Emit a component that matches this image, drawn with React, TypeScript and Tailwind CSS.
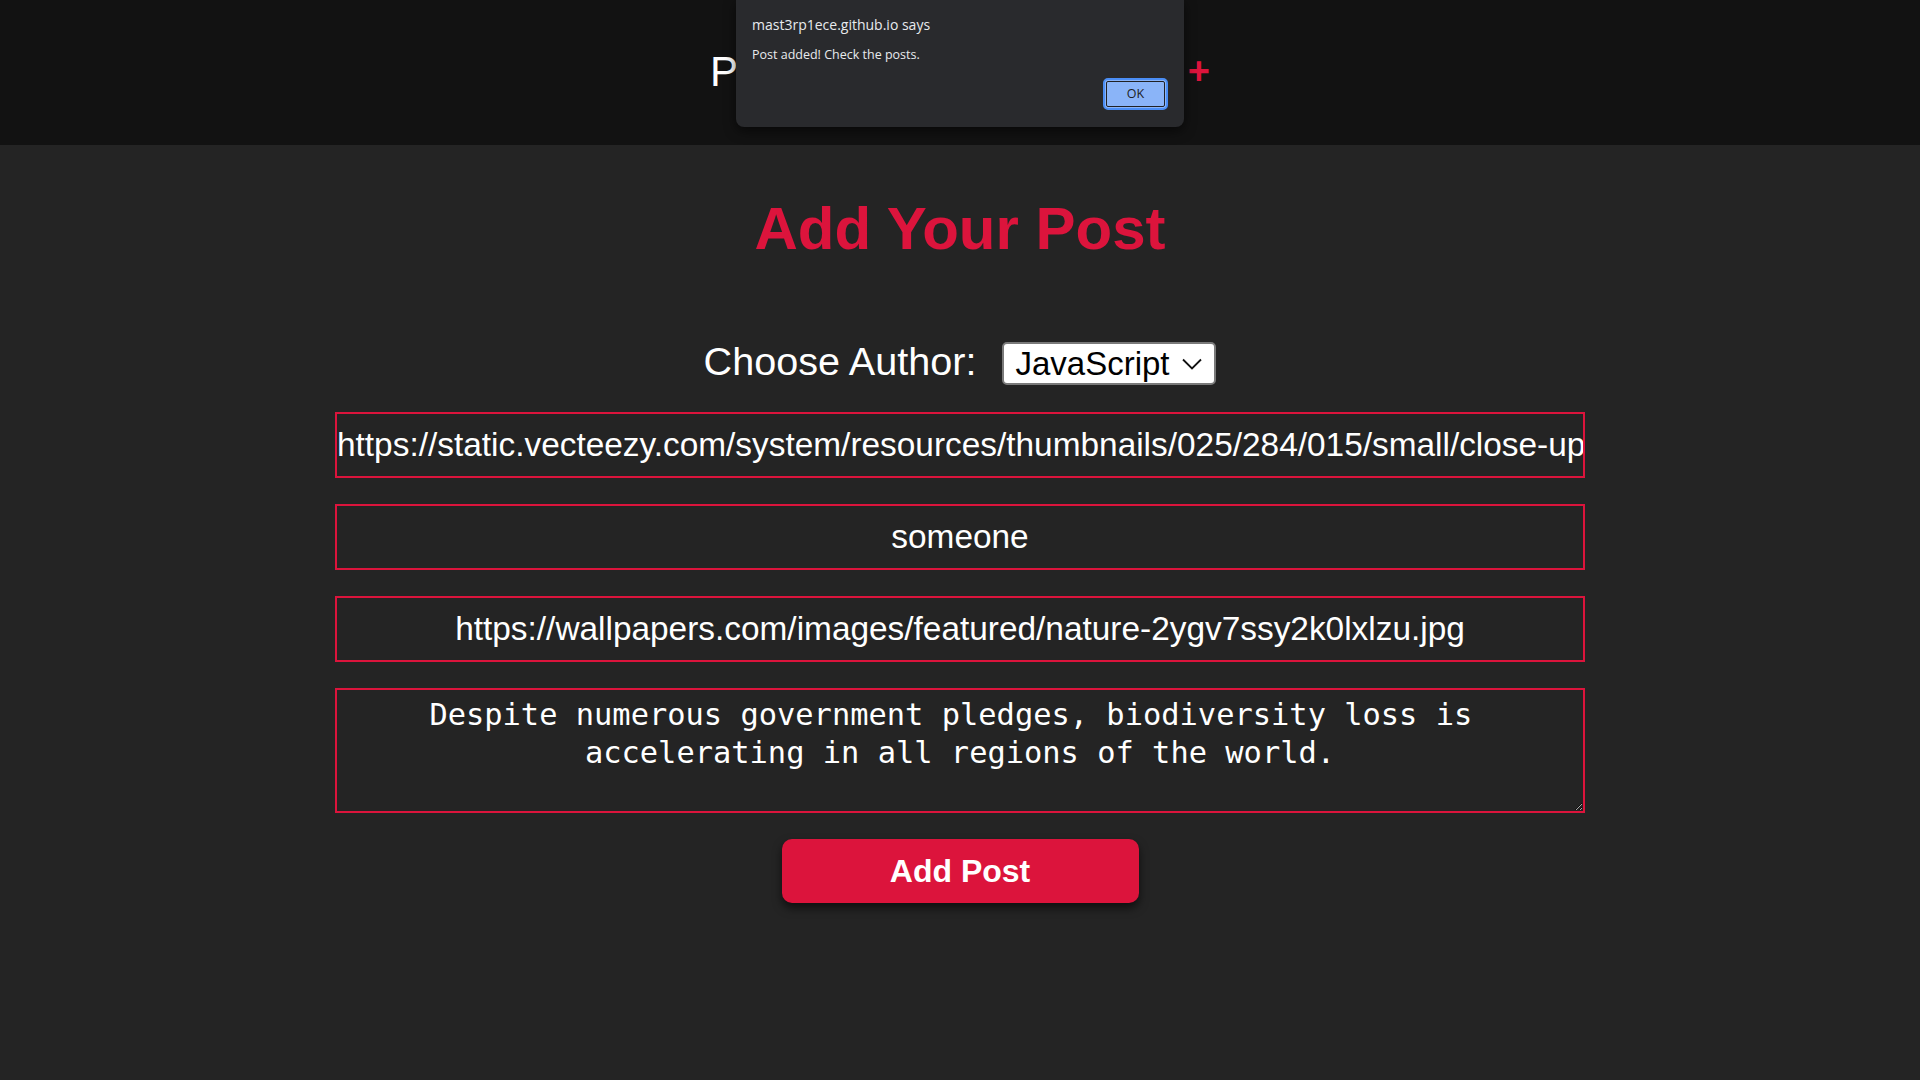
import React from "react";

export default function App() {
  return (
    <div className="min-h-screen w-full bg-[#242424] text-white" style={{ fontFamily: '"Liberation Sans", Arial, sans-serif' }}>
      {/* Header */}
      <header className="relative h-[145px] bg-[#121212] flex items-center justify-center">
        <div className="w-[500px] flex items-center justify-between -mt-[2px]">
          <span className="text-[42px] leading-none text-white">Posts</span>
          <span className="text-[38px] leading-none font-bold text-[#dc143c] mt-[-2px]">+</span>
        </div>

        {/* Alert dialog */}
        <div
          className="absolute top-0 left-[736px] w-[448px] h-[127px] bg-[#292a2d] rounded-b-[8px] shadow-[0_4px_12px_rgba(0,0,0,0.55)] text-[#e8eaed]"
          style={{ fontFamily: '"Open Sans", "Noto Sans", sans-serif' }}
        >
          <div className="pl-[16px] pt-[15px] text-[14px] leading-[19px]">mast3rp1ece.github.io says</div>
          <div className="pl-[16px] pt-[12px] text-[12.5px] leading-[17px]">Post added! Check the posts.</div>
          <div className="flex justify-end pr-[16px] pt-[15px]">
            <button className="w-[65px] h-[32px] rounded-[5px] bg-[#8ab4f8] border-2 border-[#4b8ef5] outline outline-1 outline-[#202124] outline-offset-[-4px] text-[#202124] text-[12.5px]">
              OK
            </button>
          </div>
        </div>
      </header>

      {/* Main */}
      <main className="flex flex-col items-center">
        <h1 className="mt-[49px] text-[60px] leading-[69px] font-bold text-[#dc143c]">Add Your Post</h1>

        <div className="mt-[79px] flex items-start justify-center gap-[26px]">
          <span className="text-[39.6px] leading-[39px] text-white">Choose Author:</span>
          <div className="w-[214px] h-[43px] bg-white rounded-[5px] border-2 border-[#7a7a7a] flex items-center justify-between pl-[11px] pr-[12px]">
            <span className="text-[33px] leading-none text-black">JavaScript</span>
            <svg width="20" height="12" viewBox="0 0 20 12" fill="none">
              <path d="M1 1.5 L10 10.5 L19 1.5" stroke="#111" strokeWidth="1.8" />
            </svg>
          </div>
        </div>

        <div className="mt-[27px] flex flex-col items-center gap-[26px]">
          <input
            readOnly
            value="https://static.vecteezy.com/system/resources/thumbnails/025/284/015/small/close-up-growing-green-leaves-of-plants-free-photo.jpg"
            className="w-[1250px] h-[66px] bg-transparent border-2 border-[#dc143c] text-center text-[33.4px] text-white px-0 outline-none"
            style={{ fontFamily: '"Liberation Sans", Arial, sans-serif' }}
          />
          <input
            readOnly
            value="someone"
            className="w-[1250px] h-[66px] bg-transparent border-2 border-[#dc143c] text-center text-[33.4px] text-white px-0 outline-none"
            style={{ fontFamily: '"Liberation Sans", Arial, sans-serif' }}
          />
          <input
            readOnly
            value="https://wallpapers.com/images/featured/nature-2ygv7ssy2k0lxlzu.jpg"
            className="w-[1250px] h-[66px] bg-transparent border-2 border-[#dc143c] text-center text-[33.4px] text-white px-0 outline-none"
            style={{ fontFamily: '"Liberation Sans", Arial, sans-serif' }}
          />
          <textarea
            readOnly
            defaultValue={"Despite numerous government pledges, biodiversity loss is\u00A0 accelerating in all regions of the world."}
            className="w-[1250px] h-[125px] bg-transparent border-2 border-[#dc143c] text-center text-[30.4px] leading-[38px] text-white pt-[6px] px-[2px] outline-none resize"
            style={{ fontFamily: '"DejaVu Sans Mono", "Liberation Mono", monospace' }}
          />
          <button className="w-[357px] h-[64px] rounded-[10px] bg-[#dc143c] text-white text-[32px] font-bold shadow-[0_5px_10px_rgba(0,0,0,0.6)]">
            Add Post
          </button>
        </div>
      </main>
    </div>
  );
}
